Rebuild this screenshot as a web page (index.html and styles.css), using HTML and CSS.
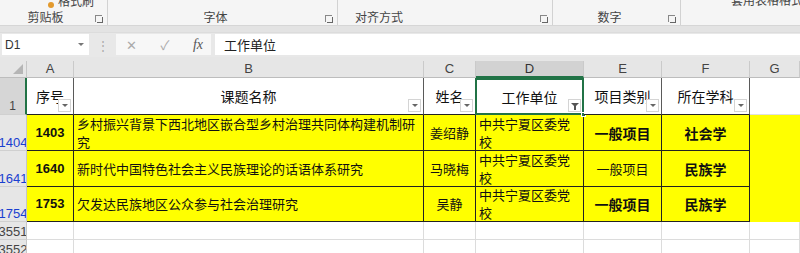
FILE: index.html
```html
<!DOCTYPE html>
<html lang="zh">
<head>
<meta charset="utf-8">
<link rel="stylesheet" href="styles.css">
</head>
<body>
<div class="ribbon">
  <div class="group g1">
    <div class="peek"><span class="brush"></span>格式刷</div>
    <div class="glabel">剪贴板</div>
    <span class="launch"></span>
  </div>
  <div class="group g2"><div class="glabel">字体</div><span class="launch"></span></div>
  <div class="group g3"><div class="glabel">对齐方式</div><span class="launch"></span></div>
  <div class="group g4"><div class="glabel">数字</div><span class="launch"></span></div>
  <div class="group g5"><div class="peek peek-r">套用表格格式</div></div>
</div>
<div class="band"></div>
<div class="fbar">
  <div class="namebox"><span>D1</span><span class="caret"></span></div>
  <div class="dots">⋮</div>
  <div class="fbtns">
    <span class="fx-x">✕</span>
    <span class="fx-ok">✓</span>
    <span class="fx-f">fx</span>
  </div>
  <div class="finput">工作单位</div>
</div>
<div class="sheet">
  <div class="corner"><span class="tri"></span></div>
  <div class="ch">A</div>
  <div class="ch">B</div>
  <div class="ch">C</div>
  <div class="ch sel">D</div>
  <div class="ch">E</div>
  <div class="ch">F</div>
  <div class="ch">G</div>

  <div class="rh rsel">1</div>
  <div class="hd">序号<span class="fb"></span></div>
  <div class="hd">课题名称<span class="fb"></span></div>
  <div class="hd">姓名<span class="fb"></span></div>
  <div class="hd active">工作单位<span class="fb funnel"></span><span class="handle"></span></div>
  <div class="hd">项目类别<span class="fb"></span></div>
  <div class="hd">所在学科<span class="fb"></span></div>
  <div class="hd plain"></div>

  <div class="rh blue">1404</div>
  <div class="y num">1403</div>
  <div class="y left">乡村振兴背景下西北地区嵌合型乡村治理共同体构建机制研究</div>
  <div class="y">姜绍静</div>
  <div class="y left">中共宁夏区委党校</div>
  <div class="y bold">一般项目</div>
  <div class="y bold">社会学</div>
  <div class="y g"></div>

  <div class="rh blue">1641</div>
  <div class="y num">1640</div>
  <div class="y left">新时代中国特色社会主义民族理论的话语体系研究</div>
  <div class="y">马晓梅</div>
  <div class="y left">中共宁夏区委党校</div>
  <div class="y">一般项目</div>
  <div class="y bold">民族学</div>
  <div class="y g"></div>

  <div class="rh blue">1754</div>
  <div class="y num">1753</div>
  <div class="y left">欠发达民族地区公众参与社会治理研究</div>
  <div class="y">吴静</div>
  <div class="y left">中共宁夏区委党校</div>
  <div class="y bold">一般项目</div>
  <div class="y bold">民族学</div>
  <div class="y g"></div>

  <div class="rh">3551</div>
  <div class="c"></div><div class="c"></div><div class="c"></div><div class="c"></div><div class="c"></div><div class="c"></div><div class="c"></div>
  <div class="rh">3552</div>
  <div class="c"></div><div class="c"></div><div class="c"></div><div class="c"></div><div class="c"></div><div class="c"></div><div class="c"></div>
</div>
</body>
</html>
```

FILE: styles.css
```css
* { box-sizing: border-box; }
html, body { margin: 0; padding: 0; }
body {
  width: 800px;
  height: 253px;
  overflow: hidden;
  background: #e6e6e6;
  font-family: "Noto Sans CJK SC", "Liberation Sans", sans-serif;
  color: #222;
}

/* ribbon */
.ribbon {
  height: 26px;
  display: flex;
  background: #f5f5f5;
  border-bottom: 1px solid #d6d6d6;
  overflow: hidden;
}
.group {
  position: relative;
  display: flex;
  flex-direction: column;
  justify-content: flex-end;
  border-right: 1px solid #d2d2d2;
  padding-bottom: 0;
}
.g1 { width: 108px; }
.g2 { width: 230px; }
.g3 { width: 215px; }
.g4 { width: 128px; }
.g5 { flex: 1; border-right: none; }
.glabel {
  font-size: 12px;
  line-height: 16px;
  color: #444;
  text-align: center;
  padding-right: 14px;
}
.g1 .glabel { padding-right: 16px; }
.g3 .glabel { text-align: left; padding-left: 17px; }
.launch {
  position: absolute;
  right: 5px;
  bottom: 3px;
  width: 7px;
  height: 7px;
  border-left: 1px solid #888;
  border-top: 1px solid #888;
}
.launch::after {
  content: "";
  position: absolute;
  left: 1px;
  top: 1px;
  width: 5px;
  height: 5px;
  border-right: 1px solid #666;
  border-bottom: 1px solid #666;
}
.peek {
  position: absolute;
  top: -8px;
  left: 48px;
  font-size: 12px;
  color: #444;
  display: flex;
  align-items: center;
  gap: 4px;
  white-space: nowrap;
}
.peek-r { left: 50px; top: -9px; }
.brush {
  width: 6px;
  height: 6px;
  border-radius: 50%;
  background: #e39a2d;
  margin-top: 8px;
}

.band {
  height: 7px;
  background: #e3e3e3;
  border-bottom: 1px solid #dcdcdc;
}

/* formula bar */
.fbar {
  height: 24px;
  display: flex;
  align-items: stretch;
  padding: 1px 0 2px 2px;
  background: #e8e8e8;
}
.namebox {
  width: 87px;
  background: #fff;
  display: flex;
  align-items: center;
  justify-content: space-between;
  padding: 0 5px 0 3px;
  font-family: "Liberation Sans", sans-serif;
  font-size: 12px;
  color: #333;
}
.caret {
  width: 0;
  height: 0;
  border-left: 3px solid transparent;
  border-right: 3px solid transparent;
  border-top: 3px solid #777;
}
.dots {
  width: 27px;
  text-align: center;
  color: #aaa;
  font-size: 12px;
  line-height: 21px;
}
.fbtns {
  width: 95px;
  background: #f7f7f7;
  display: flex;
  align-items: center;
  justify-content: space-between;
  padding: 0 8px 0 10px;
  color: #aaa;
  font-size: 13px;
}
.fx-f {
  font-family: "Liberation Serif", serif;
  font-style: italic;
  color: #555;
  font-size: 14px;
}
.finput {
  flex: 1;
  margin-left: 4px;
  background: #fff;
  font-size: 13px;
  line-height: 21px;
  padding-left: 9px;
  color: #222;
}

/* sheet */
.sheet {
  margin-top: 4px;
  display: grid;
  grid-template-columns: 27px 47px 350px 52px 108px 78px 88px 50px;
  grid-template-rows: 17px 37px 36px 36px 35px 18px 18px;
  background: #fff;
}
.corner {
  background: #e6e6e6;
  border-right: 1px solid #c6c6c6;
  border-bottom: 1px solid #bdbdbd;
  position: relative;
}
.tri {
  position: absolute;
  right: 3px;
  bottom: 3px;
  width: 0;
  height: 0;
  border-left: 10px solid transparent;
  border-bottom: 10px solid #b5b5b5;
}
.ch {
  background: #e6e6e6;
  border-right: 1px solid #cacaca;
  border-bottom: 1px solid #bdbdbd;
  font-family: "Liberation Sans", sans-serif;
  font-size: 13px;
  color: #444;
  text-align: center;
  line-height: 16px;
}
.ch.sel {
  background: #d2d2d2;
  border-bottom: 2px solid #217346;
  color: #333;
}
.rh {
  background: #e6e6e6;
  border-right: 1px solid #c6c6c6;
  border-bottom: 1px solid #d0d0d0;
  font-family: "Liberation Sans", sans-serif;
  font-size: 13px;
  color: #444;
  display: flex;
  align-items: flex-end;
  justify-content: center;
  line-height: 15px;
  overflow: hidden;
  white-space: nowrap;
}
.rh.rsel {
  background: #d6d6d6;
  border-right: 2px solid #217346;
  font-size: 12px;
}
.rh.blue { color: #1a3fd0; }

.hd {
  position: relative;
  background: #fff;
  border-right: 1px solid #5a5a5a;
  border-bottom: 1px solid #222;
  display: flex;
  align-items: center;
  justify-content: center;
  font-size: 14px;
  color: #111;
}
.hd.plain { border-right: none; border-bottom: 1px solid #e0e0e0; }
.hd.active {
  border: 2px solid #217346;
  margin-left: -1px;
}
.fb {
  position: absolute;
  right: 2px;
  bottom: 2px;
  width: 13px;
  height: 13px;
  background: #fff;
  border: 1px solid #d4d4d4;
}
.fb::after {
  content: "";
  position: absolute;
  left: 3px;
  top: 4px;
  border-left: 3px solid transparent;
  border-right: 3px solid transparent;
  border-top: 3px solid #666;
}
.fb.funnel { right: 1px; bottom: 1px; }
.fb.funnel::after {
  left: 2px;
  top: 3px;
  border-left: 4px solid transparent;
  border-right: 4px solid transparent;
  border-top: 4px solid #555;
}
.fb.funnel::before {
  content: "";
  position: absolute;
  left: 5px;
  top: 6px;
  width: 2px;
  height: 4px;
  background: #555;
}
.handle {
  position: absolute;
  right: -4px;
  bottom: -4px;
  width: 5px;
  height: 5px;
  background: #217346;
  border: 1px solid #fff;
}

.y {
  background: #ffff00;
  border-right: 1px solid #222;
  border-bottom: 1px solid #222;
  display: flex;
  align-items: center;
  justify-content: center;
  text-align: center;
  font-size: 13px;
  line-height: 18px;
  color: #111;
  padding: 0 3px;
}
.y.left { justify-content: flex-start; text-align: left; }
.y.num {
  font-family: "Liberation Sans", sans-serif;
  font-weight: bold;
  font-size: 13px;
}
.y.bold {
  font-weight: bold;
  font-size: 14px;
}
.y.g { border-right: none; border-bottom: none; }

.c {
  background: #fff;
  border-right: 1px solid #dcdcdc;
  border-bottom: 1px solid #dcdcdc;
}
```
